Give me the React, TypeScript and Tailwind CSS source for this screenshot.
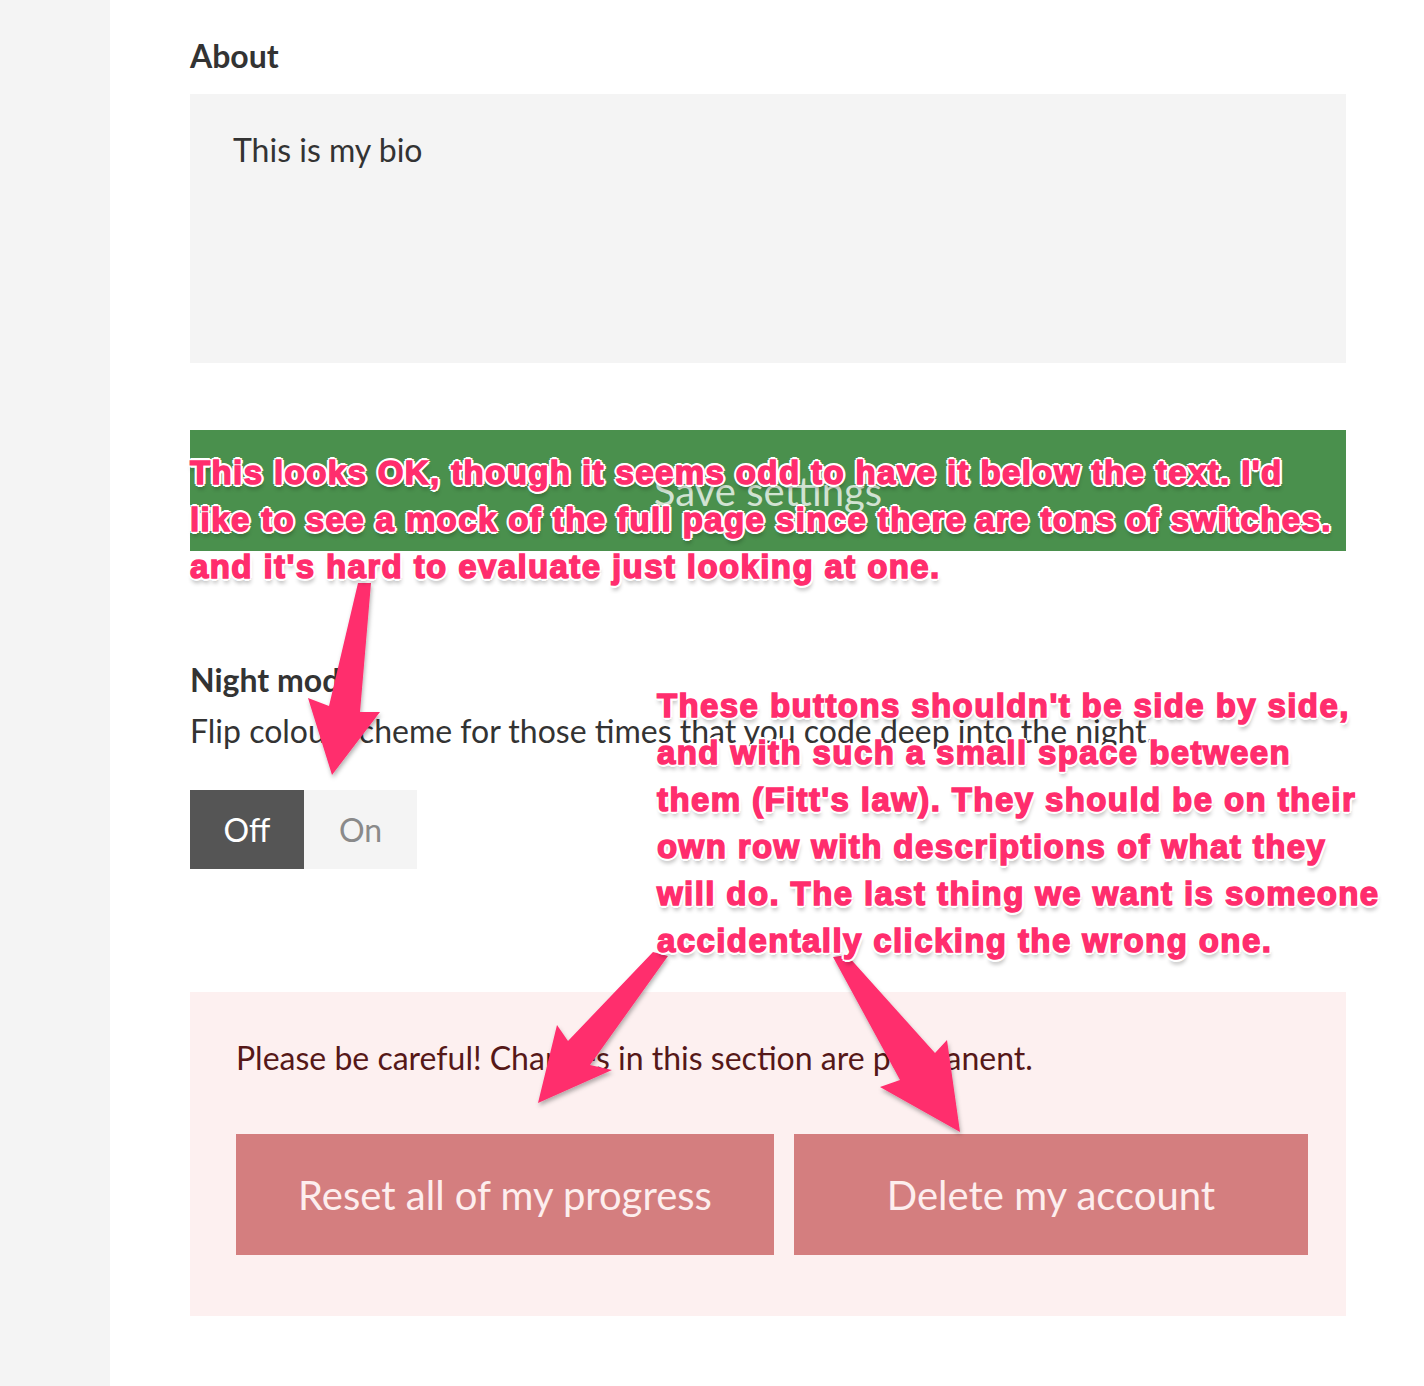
import React from "react";

const note =
  "font-['Liberation_Sans',Arial,sans-serif] font-bold text-[33px] leading-[47px] tracking-[1.4px] text-[#ff2d6d] whitespace-nowrap [-webkit-text-stroke:1.5px_#ff2d6d] [text-shadow:-2px_-2px_0_#fff,2px_-2px_0_#fff,-2px_2px_0_#fff,2px_2px_0_#fff,0_-3px_0_#fff,0_3px_0_#fff,-3px_0_0_#fff,3px_0_0_#fff,1px_5px_4px_rgba(0,0,0,0.3)]";

function Arrows() {
  return (
    <svg
      className="absolute left-0 top-0 pointer-events-none"
      width={1424}
      height={1386}
      viewBox="0 0 1424 1386"
    >
      <defs>
        <filter id="arrowShadow" x="-20%" y="-20%" width="140%" height="140%">
          <feDropShadow dx="1" dy="3" stdDeviation="2" floodColor="#000" floodOpacity="0.3" />
        </filter>
      </defs>
      <g fill="#ff2d6d" filter="url(#arrowShadow)">
        <polygon points="358,583 371,583 360,712 380,712 332,775 308,698 329,706" />
        <polygon points="653,952 668,956 590,1065 612,1070 538,1103 557,1025 568,1041" />
        <polygon points="833,957 847,955 935,1053 947,1040 960,1132 880,1087 900,1080" />
      </g>
    </svg>
  );
}

export default function App() {
  return (
    <div className="relative flex min-h-[1386px] w-[1424px] bg-white font-['Lato',sans-serif] text-[#333]">
      <aside className="w-[110px] shrink-0 bg-[#f4f4f4]" />

      <main className="w-[1156px] ml-[80px] pt-[38px]">
        {/* About */}
        <h2 className="text-[32px] leading-[36px] font-bold text-[#333]">About</h2>
        <div className="mt-[20px] h-[269px] bg-[#f4f4f4] pl-[43px] pt-[38px] text-[32px] leading-[36px] text-[#333]">
          This is my bio
        </div>

        <button className="mt-[67px] flex h-[121px] w-full items-center justify-center bg-[#4a904d] text-[40px] text-white/75">
          Save settings
        </button>

        {/* Night mode */}
        <div className="mt-[111px]">
          <h3 className="text-[32px] leading-[36px] font-bold">Night mode</h3>
          <p className="mt-[15px] text-[32px] leading-[36px]">
            Flip colour scheme for those times that you code deep into the night.
          </p>
          <div className="mt-[41px] flex h-[79px]">
            <button className="w-[114px] bg-[#555] text-[32px] text-white">Off</button>
            <button className="w-[113px] bg-[#f4f4f4] text-[32px] text-[#8a8a8a]">On</button>
          </div>
        </div>

        {/* Danger zone */}
        <section className="mt-[123px] h-[324px] bg-[#fdf0f0] pl-[46px] pt-[48px]">
          <p className="text-[32px] leading-[36px] text-[#561818]">
            Please be careful! Changes in this section are permanent.
          </p>
          <div className="mt-[58px] flex gap-[20px]">
            <button className="h-[121px] w-[538px] bg-[#d47e7f] text-[40px] text-[#fdeeee]">
              Reset all of my progress
            </button>
            <button className="h-[121px] w-[514px] bg-[#d47e7f] text-[40px] text-[#fdeeee]">
              Delete my account
            </button>
          </div>
        </section>
      </main>

      <Arrows />

      {/* review notes */}
      <div className={`absolute left-[190px] top-[449px] ${note}`}>
        <div>This looks OK, though it seems odd to have it below the text. I'd</div>
        <div>like to see a mock of the full page since there are tons of switches.</div>
        <div>and it's hard to evaluate just looking at one.</div>
      </div>
      <div className={`absolute left-[657px] top-[682px] ${note}`}>
        <div>These buttons shouldn't be side by side,</div>
        <div>and with such a small space between</div>
        <div>them (Fitt's law). They should be on their</div>
        <div>own row with descriptions of what they</div>
        <div>will do. The last thing we want is someone</div>
        <div>accidentally clicking the wrong one.</div>
      </div>
    </div>
  );
}
